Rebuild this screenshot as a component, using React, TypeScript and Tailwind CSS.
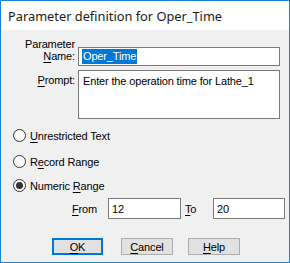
import React from "react";

const U: React.FC<{ children: React.ReactNode }> = ({ children }) => (
  <span className="underline underline-offset-2">{children}</span>
);

const Radio: React.FC<{ checked?: boolean; className?: string; children: React.ReactNode }> = ({
  checked,
  className,
  children,
}) => (
  <div className={"flex items-center h-[13px] pl-[12px] " + (className ?? "")}>
    <span className="w-[13px] h-[13px] rounded-full border border-[#333333] bg-white flex items-center justify-center">
      {checked && <span className="w-[7px] h-[7px] rounded-full bg-[#333333]" />}
    </span>
    <span className="ml-[4px]">{children}</span>
  </div>
);

export default function App() {
  return (
    <div
      className="w-[290px] h-[263px] border border-[#1883d7] bg-[#f0f0f0] flex flex-col text-black text-[11px] leading-[12px] tracking-[-0.15px]"
      style={{ fontFamily: '"Liberation Sans", Arial, sans-serif' }}
    >
      <div
        className="h-[29px] bg-white pl-[7px] flex items-center text-[12.8px] tracking-normal text-[#1a1a1a]"
        style={{ fontFamily: '"Noto Sans", "Open Sans", sans-serif' }}
      >
        Parameter definition for Oper_Time
      </div>

      <div className="flex flex-col pt-[8px]">
        <div className="flex items-start">
          <div className="w-[74px] text-right">
            <div>Parameter</div>
            <div>
              <U>N</U>ame:
            </div>
          </div>
          <div className="ml-[3px] mt-[9px] w-[202px] h-[19px] border border-[#7a7a7a] bg-white flex items-center pl-[3px]">
            <span className="bg-[#0078d7] text-white leading-[15px] px-[1px]">Oper_Time</span>
          </div>
        </div>

        <div className="flex items-start mt-[4px]">
          <div className="w-[74px] text-right pt-[4px]">
            <U>P</U>rompt:
          </div>
          <div className="ml-[3px] w-[202px] h-[49px] border border-[#7a7a7a] bg-white pl-[4px] pt-[4px]">
            Enter the operation time for Lathe_1
          </div>
        </div>

        <Radio className="mt-[10px]">
          <U>U</U>nrestricted Text
        </Radio>
        <Radio className="mt-[13px]">
          R<U>e</U>cord Range
        </Radio>
        <Radio checked className="mt-[11px]">
          Numeric <U>R</U>ange
        </Radio>

        <div className="flex items-center mt-[6px] h-[21px]">
          <span className="ml-[71px] w-[36px]">
            <U>F</U>rom
          </span>
          <div className="w-[73px] h-[21px] border border-[#7a7a7a] bg-white flex items-center pl-[3px]">
            12
          </div>
          <span className="ml-[4px] w-[28px]">
            <U>T</U>o
          </span>
          <div className="w-[72px] h-[21px] border border-[#7a7a7a] bg-white flex items-center pl-[3px]">
            20
          </div>
        </div>

        <div className="flex items-center mt-[19px]">
          <button className="ml-[51px] w-[51px] h-[17px] border-2 border-[#0078d7] bg-[#e1e1e1] flex items-center justify-center">
            <U>O</U>K
          </button>
          <button className="ml-[18px] w-[52px] h-[17px] border border-[#adadad] bg-[#e1e1e1] flex items-center justify-center">
            <U>C</U>ancel
          </button>
          <button className="ml-[15px] w-[52px] h-[17px] border border-[#adadad] bg-[#e1e1e1] flex items-center justify-center">
            <U>H</U>elp
          </button>
        </div>
      </div>
    </div>
  );
}
